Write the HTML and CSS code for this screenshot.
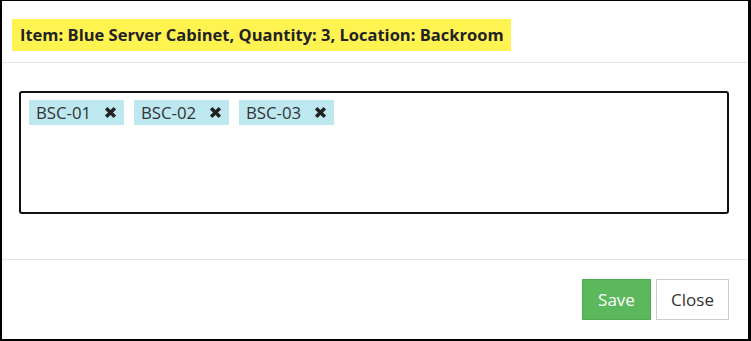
FILE: index.html
```html
<!DOCTYPE html>
<html>
<head>
<meta charset="utf-8">
<link rel="stylesheet" href="styles.css">
</head>
<body>
<div class="frame">
  <div class="modal-header">
    <h4 class="title">Item: Blue Server Cabinet, Quantity: 3, Location: Backroom</h4>
  </div>
  <div class="modal-body">
    <div class="tagbox">
      <span class="tag">BSC-01<svg class="x" viewBox="0 0 12 12"><path d="M2 2L10 10M10 2L2 10"/></svg></span>
      <span class="tag">BSC-02<svg class="x" viewBox="0 0 12 12"><path d="M2 2L10 10M10 2L2 10"/></svg></span>
      <span class="tag">BSC-03<svg class="x" viewBox="0 0 12 12"><path d="M2 2L10 10M10 2L2 10"/></svg></span>
    </div>
  </div>
  <div class="modal-footer">
    <button class="btn btn-save">Save</button>
    <button class="btn btn-close">Close</button>
  </div>
</div>
</body>
</html>
```
FILE: styles.css
```css
html, body { margin: 0; padding: 0; background: #fff; }
body { font-family: "Open Sans", "Noto Sans", sans-serif; color: #333; }
.frame {
  width: 751px; height: 341px; box-sizing: border-box;
  border-style: solid; border-color: #000;
  border-width: 1px 3px 2px 2px;
  display: flex; flex-direction: column;
}
.modal-header {
  padding: 18px 10px 11px;
  border-bottom: 1px solid #e5e5e5;
}
.title {
  display: inline-block; margin: 0;
  background: #fff352; color: #222;
  font-size: 16.5px; font-weight: 700;
  line-height: 32px; padding: 0 8px 0 8px; width: 499px; box-sizing: border-box;
  white-space: nowrap;
}
.modal-body {
  flex: 1;
  padding: 28px 19px 0 17px;
  border-bottom: 1px solid #e5e5e5;
}
.tagbox {
  height: 123px; box-sizing: border-box;
  border: 2px solid #111; border-radius: 3px;
  padding: 7px 8px;
  display: flex; align-items: flex-start; gap: 10px;
}
.tag {
  display: inline-flex; align-items: center;
  background: #bde8f0; color: #333;
  font-size: 16.8px; height: 25px; width: 95px; box-sizing: border-box;
  padding: 0 7px 0 7px; justify-content: space-between;
}
.x { width: 13px; height: 13px; }
.x path { stroke: #222; stroke-width: 3.2; fill: none; }
.modal-footer {
  padding: 19px 19px 19px 0;
  display: flex; justify-content: flex-end; gap: 5px;
}
.btn {
  height: 41px; font-family: inherit; font-size: 17px;
  border: 1px solid #ccc; background: #fff; color: #333;
  border-radius: 0; padding: 0; margin: 0;
}
.btn-save { background: #5cb85c; border-color: #4cae4c; color: #fff; width: 69px; }
.btn-close { width: 73px; }
```
